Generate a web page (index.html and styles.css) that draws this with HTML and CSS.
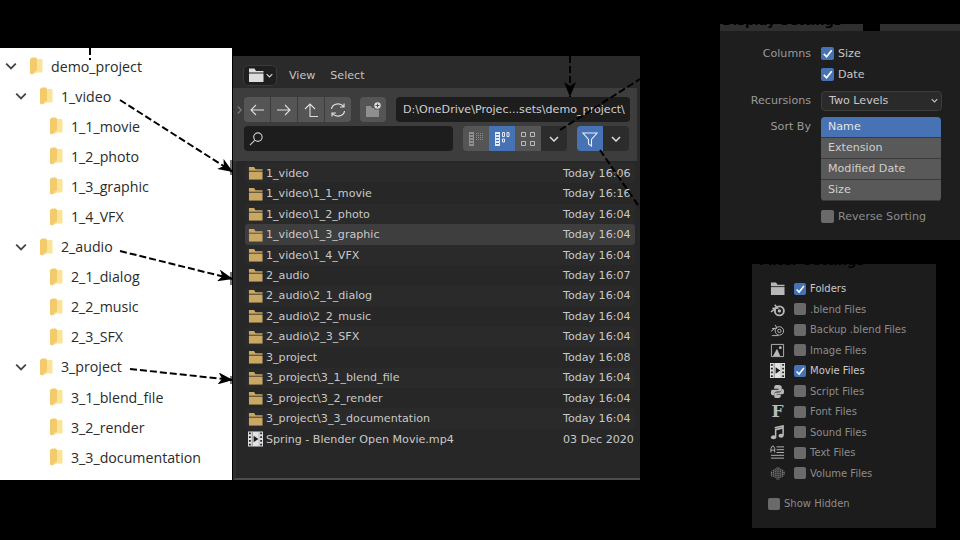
FILE: index.html
```html
<!DOCTYPE html>
<html lang="en">
<head>
  <meta charset="UTF-8">
  <title>Blender file browser with recursive folders</title>
  <link rel="stylesheet" href="styles.css">
</head>
<body>

<svg class="defs" width="0" height="0">
  <symbol id="win-folder" viewBox="0 0 14 18">
    <path d="M1 2 3 .5h4L8 2v13L3 17.500 1 16.500z" fill="#f3cb6c"/>
    <path d="M8 2h5l.5 1v12l-.5.5H4l4-2z" fill="#fbe397"/>
  </symbol>
  <symbol id="bl-folder" viewBox="0 0 16 14">
    <path d="M1 .5h5.500L8 3h7.500v1.500H1z" fill="currentColor"/>
    <path d="M1 5.500h14.500V14H1z" fill="currentColor"/>
  </symbol>
  <symbol id="film" viewBox="0 0 16 16">
    <path d="M0 0h16v16H0z" fill="#e2e2e2"/>
    <path d="M1 1h2v2H1zM1 5h2v2H1zM1 9h2v2H1zM1 13h2v2H1zM13 1h2v2h-2zM13 5h2v2h-2zM13 9h2v2h-2zM13 13h2v2h-2z" fill="#282828"/>
    <path d="M4 0h1v16H4zM11.500 0h.5v16h-.5z" fill="#8a8a8a"/>
    <path d="M6 4.500v7L11 8z" fill="#1c1c1c"/>
  </symbol>
  <symbol id="chev" viewBox="0 0 10 6">
    <path d="M1 1l4 4 4-4" fill="none" stroke="currentColor" stroke-width="1.500"/>
  </symbol>
  <symbol id="tick" viewBox="0 0 14 14">
    <path d="M3 7.500l3 3 5.500-7" fill="none" stroke="#fff" stroke-width="1.800"/>
  </symbol>
</svg>

<!-- explorer tree -->
<section class="tree">
  <div class="tree-row lvl0"><svg class="tw"><use href="#chev"/></svg><svg class="tf"><use href="#win-folder"/></svg>demo_project</div>
  <div class="tree-row lvl1"><svg class="tw"><use href="#chev"/></svg><svg class="tf"><use href="#win-folder"/></svg>1_video</div>
  <div class="tree-row lvl2"><svg class="tf"><use href="#win-folder"/></svg>1_1_movie</div>
  <div class="tree-row lvl2"><svg class="tf"><use href="#win-folder"/></svg>1_2_photo</div>
  <div class="tree-row lvl2"><svg class="tf"><use href="#win-folder"/></svg>1_3_graphic</div>
  <div class="tree-row lvl2"><svg class="tf"><use href="#win-folder"/></svg>1_4_VFX</div>
  <div class="tree-row lvl1"><svg class="tw"><use href="#chev"/></svg><svg class="tf"><use href="#win-folder"/></svg>2_audio</div>
  <div class="tree-row lvl2"><svg class="tf"><use href="#win-folder"/></svg>2_1_dialog</div>
  <div class="tree-row lvl2"><svg class="tf"><use href="#win-folder"/></svg>2_2_music</div>
  <div class="tree-row lvl2"><svg class="tf"><use href="#win-folder"/></svg>2_3_SFX</div>
  <div class="tree-row lvl1"><svg class="tw"><use href="#chev"/></svg><svg class="tf"><use href="#win-folder"/></svg>3_project</div>
  <div class="tree-row lvl2"><svg class="tf"><use href="#win-folder"/></svg>3_1_blend_file</div>
  <div class="tree-row lvl2"><svg class="tf"><use href="#win-folder"/></svg>3_2_render</div>
  <div class="tree-row lvl2"><svg class="tf"><use href="#win-folder"/></svg>3_3_documentation</div>
</section>

<!-- blender file browser -->
<section class="browser">
  <div class="menu-bar">
    <div class="editor-btn"><svg class="ed-folder"><use href="#bl-folder"/></svg><svg class="chev-s"><use href="#chev"/></svg></div>
    <span class="menu-item">View</span>
    <span class="menu-item">Select</span>
  </div>
  <div class="toolbar">
    <svg class="region-tab"><use href="#chev"/></svg>
    <div class="tool-row">
      <div class="btn-group">
        <div class="tbtn"><svg viewBox="0 0 16 16"><path d="M15 8H2M7 3 2 8l5 5" fill="none" stroke="currentColor" stroke-width="1.100"/></svg></div>
        <div class="tbtn"><svg viewBox="0 0 16 16"><path d="M1 8h13M9 3l5 5-5 5" fill="none" stroke="currentColor" stroke-width="1.100"/></svg></div>
        <div class="tbtn"><svg viewBox="0 0 16 16"><path d="M7 15V2M2 7l5-5 5 5M7 14.500h8" fill="none" stroke="currentColor" stroke-width="1.100"/></svg></div>
        <div class="tbtn"><svg viewBox="0 0 16 16"><path d="M1.500 7a6.500 5.500 0 0 1 12-2.500M14.500 9a6.500 5.500 0 0 1-12 2.500M10 5h4V1.500M6 11H2v3.500" fill="none" stroke="currentColor" stroke-width="1.200"/></svg></div>
      </div>
      <div class="tbtn single"><svg viewBox="0 0 16 16"><path d="M1 4h5l1 2h2.500v1.500H14V15H1z" fill="#8f8f8f"/><circle cx="12.500" cy="3.500" r="3.200" fill="#ddd"/><path d="M12.500 1.600v3.800M10.600 3.500h3.800" stroke="#555"/></svg></div>
      <div class="path-field">D:\OneDrive\Projec...sets\demo_project\</div>
    </div>
    <div class="tool-row">
      <div class="search-field"><svg viewBox="0 0 16 16"><circle cx="9.500" cy="6.500" r="4.500" fill="none" stroke="#ccc" stroke-width="1.200"/><path d="M6 10l-5 5" stroke="#ccc" stroke-width="1.200"/></svg></div>
      <div class="btn-group view-group">
        <div class="tbtn"><svg viewBox="0 0 16 16"><path d="M1 1h5v14H1z" fill="#909090"/><path d="M2 3.500h3M2 6.500h3M2 9.500h3M2 12.500h3" stroke="#555"/><path d="M8 2.500h7M8 4.500h7M8 6.500h7M8 8.500h7" stroke="#8a8a8a" stroke-dasharray="1 1"/></svg></div>
        <div class="tbtn on"><svg viewBox="0 0 16 16"><path d="M1 1h5v14H1z" fill="#e4ebf6"/><path d="M2 3.500h3M2 6.500h3M2 9.500h3M2 12.500h3" stroke="#4772b3"/><path d="M8.500 1.500h2v4h-2zM13 1.500h2v4h-2zM8.500 8h2v3h-2z" fill="none" stroke="#e4ebf6"/></svg></div>
        <div class="tbtn"><svg viewBox="0 0 16 16"><path d="M1.500 1.500h4v4h-4zM10.500 1.500h4v4h-4zM1.500 10.500h4v4h-4zM10.500 10.500h4v4h-4z" fill="none" stroke="#bbb"/></svg></div>
        <div class="tbtn dark"><svg class="chev-s"><use href="#chev"/></svg></div>
      </div>
      <div class="btn-group filter-group">
        <div class="tbtn on"><svg viewBox="0 0 16 16"><path d="M1 2h14L9.500 8.500V15l-3-2V8.500z" fill="none" stroke="#e8eef8" stroke-width="1.100"/></svg></div>
        <div class="tbtn dark"><svg class="chev-s"><use href="#chev"/></svg></div>
      </div>
    </div>
  </div>
  <div class="file-list">
    <div class="file-row"><svg class="fi"><use href="#bl-folder"/></svg><span class="fname">1_video</span><span class="fdate">Today 16:06</span></div>
    <div class="file-row"><svg class="fi"><use href="#bl-folder"/></svg><span class="fname">1_video\1_1_movie</span><span class="fdate">Today 16:16</span></div>
    <div class="file-row"><svg class="fi"><use href="#bl-folder"/></svg><span class="fname">1_video\1_2_photo</span><span class="fdate">Today 16:04</span></div>
    <div class="file-row hover"><svg class="fi"><use href="#bl-folder"/></svg><span class="fname">1_video\1_3_graphic</span><span class="fdate">Today 16:04</span></div>
    <div class="file-row"><svg class="fi"><use href="#bl-folder"/></svg><span class="fname">1_video\1_4_VFX</span><span class="fdate">Today 16:04</span></div>
    <div class="file-row"><svg class="fi"><use href="#bl-folder"/></svg><span class="fname">2_audio</span><span class="fdate">Today 16:07</span></div>
    <div class="file-row"><svg class="fi"><use href="#bl-folder"/></svg><span class="fname">2_audio\2_1_dialog</span><span class="fdate">Today 16:04</span></div>
    <div class="file-row"><svg class="fi"><use href="#bl-folder"/></svg><span class="fname">2_audio\2_2_music</span><span class="fdate">Today 16:04</span></div>
    <div class="file-row"><svg class="fi"><use href="#bl-folder"/></svg><span class="fname">2_audio\2_3_SFX</span><span class="fdate">Today 16:04</span></div>
    <div class="file-row"><svg class="fi"><use href="#bl-folder"/></svg><span class="fname">3_project</span><span class="fdate">Today 16:08</span></div>
    <div class="file-row"><svg class="fi"><use href="#bl-folder"/></svg><span class="fname">3_project\3_1_blend_file</span><span class="fdate">Today 16:04</span></div>
    <div class="file-row"><svg class="fi"><use href="#bl-folder"/></svg><span class="fname">3_project\3_2_render</span><span class="fdate">Today 16:04</span></div>
    <div class="file-row"><svg class="fi"><use href="#bl-folder"/></svg><span class="fname">3_project\3_3_documentation</span><span class="fdate">Today 16:04</span></div>
    <div class="file-row"><svg class="fi film"><use href="#film"/></svg><span class="fname">Spring - Blender Open Movie.mp4</span><span class="fdate">03 Dec 2020</span></div>
  </div>
</section>

<!-- display settings popover -->
<section class="display-panel">
  <div class="tabs">
    <div class="tab tab-main"><span class="cut-title">Display Settings</span></div>
    <div class="tab tab-rest"></div>
  </div>
  <div class="set-row tall">
    <span class="set-label">Columns</span>
    <span class="check on"><svg><use href="#tick"/></svg></span><span class="check-text">Size</span>
  </div>
  <div class="set-row tall">
    <span class="set-label"></span>
    <span class="check on"><svg><use href="#tick"/></svg></span><span class="check-text">Date</span>
  </div>
  <div class="set-row recur">
    <span class="set-label">Recursions</span>
    <div class="select">Two Levels<svg class="chev-s"><use href="#chev"/></svg></div>
  </div>
  <div class="set-row sort">
    <span class="set-label">Sort By</span>
    <div class="sort-list">
      <div class="sort-opt on">Name</div>
      <div class="sort-opt">Extension</div>
      <div class="sort-opt">Modified Date</div>
      <div class="sort-opt">Size</div>
    </div>
  </div>
  <div class="set-row reverse">
    <span class="set-label"></span>
    <span class="check"></span><span class="check-text dim">Reverse Sorting</span>
  </div>
</section>

<!-- filter settings popover -->
<section class="filter-panel">
  <div class="filter-title"><span class="cut-title">Filter Settings</span></div>
  <div class="filter-row">
    <svg class="ficon" viewBox="0 0 16 14"><use href="#bl-folder"/></svg>
    <span class="check on"><svg><use href="#tick"/></svg></span><span class="check-text">Folders</span>
  </div>
  <div class="filter-row">
    <svg class="ficon" viewBox="0 0 16 16"><circle cx="10" cy="9.500" r="4.800" fill="none" stroke="currentColor" stroke-width="2"/><circle cx="10" cy="9.500" r="1.800" fill="currentColor"/><path d="M1 10.500 6 7H2.500L8 6.500 5 3" fill="none" stroke="currentColor" stroke-width="1.600"/></svg>
    <span class="check"></span><span class="check-text dim">.blend Files</span>
  </div>
  <div class="filter-row">
    <svg class="ficon" viewBox="0 0 16 16"><circle cx="10" cy="9.500" r="4.500" fill="none" stroke="currentColor"/><circle cx="10" cy="9.500" r="1.800" fill="none" stroke="currentColor"/><path d="M1 10 5 7H2.500L7.500 6.500 5.500 3M2 14.500h7" fill="none" stroke="currentColor"/></svg>
    <span class="check"></span><span class="check-text dim">Backup .blend Files</span>
  </div>
  <div class="filter-row">
    <svg class="ficon" viewBox="0 0 16 16"><path d="M1.500 1.500h13v13h-13z" fill="none" stroke="currentColor"/><path d="M3 14l4.500-8 3.500 8z" fill="currentColor"/><circle cx="11" cy="5" r="1.500" fill="currentColor"/></svg>
    <span class="check"></span><span class="check-text dim">Image Files</span>
  </div>
  <div class="filter-row">
    <svg class="ficon" viewBox="0 0 16 16"><use href="#film"/></svg>
    <span class="check on"><svg><use href="#tick"/></svg></span><span class="check-text">Movie Files</span>
  </div>
  <div class="filter-row">
    <svg class="ficon" viewBox="0 0 16 16"><path d="M8 1C4 1 4.500 3 4.500 5H9v1H3C1 6 1 8 1 9.500S2 12 3 12h1.500c0-3 1-4 3.500-4h3c1 0 1.500-1 1.500-2V3c0-1.500-2-2-4.500-2z" fill="currentColor"/><path d="M8 15c4 0 3.500-2 3.500-3.500H7V11h6c2 0 2-2 2-3.500S14 5 13 5h-.5c0 3-1 4-3.500 4H6c-1 0-1.500 1-1.500 2v2c0 1.500 1 2 3.500 2z" fill="currentColor"/></svg>
    <span class="check"></span><span class="check-text dim">Script Files</span>
  </div>
  <div class="filter-row">
    <span class="ficon font-ic">F</span>
    <span class="check"></span><span class="check-text dim">Font Files</span>
  </div>
  <div class="filter-row">
    <svg class="ficon" viewBox="0 0 16 16"><path d="M5 3l9-2v2L6 5v8M14 2v9" fill="none" stroke="currentColor" stroke-width="1.600"/><ellipse cx="3.800" cy="13" rx="2.800" ry="2.200" fill="currentColor"/><ellipse cx="11.800" cy="11.500" rx="2.800" ry="2.200" fill="currentColor"/></svg>
    <span class="check"></span><span class="check-text dim">Sound Files</span>
  </div>
  <div class="filter-row">
    <svg class="ficon" viewBox="0 0 16 16"><path d="M1 8V3.500L2.500 1h1L5 3.500V8M1 5.500h4M7 2h8M7 5h8M7 8h8M1 11h14M1 14h14" fill="none" stroke="currentColor"/></svg>
    <span class="check"></span><span class="check-text dim">Text Files</span>
  </div>
  <div class="filter-row">
    <svg class="ficon" viewBox="0 0 16 16"><path d="M1.500 6v5M3.500 4v8M5.500 3v10M7.500 1.500v13M9.500 1.500v13M11.500 3v10M13.500 4v8M15 6v4" fill="none" stroke="currentColor" stroke-dasharray="1.500 .5" opacity=".8"/></svg>
    <span class="check"></span><span class="check-text dim">Volume Files</span>
  </div>
  <div class="hidden-row">
    <span class="check"></span><span class="check-text dim">Show Hidden</span>
  </div>
</section>

<!-- arrows lie over the panels -->
<svg class="arrows" viewBox="0 0 960 540">
  <defs>
    <marker id="head" markerWidth="16" markerHeight="12" refX="15" refY="6" orient="auto" markerUnits="userSpaceOnUse">
      <path d="M0 0 15 6 0 12 4 6z" fill="#000"/>
    </marker>
  </defs>
  <path class="tip-mark" d="M230 160h2v15h-2zM230 272h2v13h-2zM230 376h2v8h-2z"/>
  <g fill="none" stroke="#000" stroke-width="2" stroke-dasharray="7 3">
    <path d="M90 48v12"/>
    <path d="M120 100 233 172" marker-end="url(#head)"/>
    <path d="M120 251 233 279" marker-end="url(#head)"/>
    <path d="M130 369 233 380" marker-end="url(#head)"/>
    <path d="M570 56v41" marker-end="url(#head)"/>
    <path d="M560 130 640 79"/>
    <path d="M600 150 640 208"/>
  </g>
</svg>

</body>
</html>
```

FILE: styles.css
```css
body {
  margin: 0;
  width: 960px;
  height: 540px;
  background: #000;
  overflow: hidden;
  position: relative;
  font-family: "DejaVu Sans", sans-serif;
  font-size: 11.100px;
  color: #c8c8c8;
}

.defs {
  position: absolute;
}

svg {
  display: block;
}

.arrows {
  position: absolute;
  left: 0;
  top: 0;
  width: 960px;
  height: 540px;
  pointer-events: none;
}

.tip-mark {
  fill: #777;
}

/* explorer tree */
.tree {
  position: absolute;
  left: 0;
  top: 48px;
  width: 232px;
  height: 432px;
  background: #fff;
  padding-top: 3px;
  box-sizing: border-box;
  font-family: "Open Sans", sans-serif;
  font-size: 14.200px;
  color: #2b2b2b;
}

.tree-row {
  height: 30.100px;
  display: flex;
  align-items: center;
}

.lvl0 { padding-left: 5px; }
.lvl1 { padding-left: 15px; }
.lvl2 { padding-left: 49px; }

.tw {
  width: 12px;
  height: 8px;
  color: #444;
  margin-right: 12px;
}

.tf {
  width: 14px;
  height: 18px;
  margin-right: 8px;
}

/* file browser */
.browser {
  position: absolute;
  left: 233px;
  top: 56px;
  width: 407px;
  height: 424px;
  background: #232323;
  display: flex;
  flex-direction: column;
}

.menu-bar {
  height: 32px;
  background: #2a2a2a;
  display: flex;
  align-items: center;
  padding: 6px 0 0 10px;
  box-sizing: border-box;
}

.editor-btn {
  width: 34px;
  height: 21px;
  background: #1f1f1f;
  border: 1px solid #3a3a3a;
  box-sizing: border-box;
  border-radius: 5px;
  display: flex;
  align-items: center;
  justify-content: center;
  gap: 2px;
  margin-right: 12px;
  color: #ddd;
}

.ed-folder {
  width: 16px;
  height: 14px;
}

.chev-s {
  width: 7px;
  height: 5px;
}

.menu-item {
  margin-right: 15px;
  color: #c4c4c4;
}

.toolbar {
  position: relative;
  height: 73px;
  background: #3d3d3d;
  padding: 9px 0 0 11px;
  border-right: 3px solid #2a2a2a;
  box-sizing: border-box;
  display: flex;
  flex-direction: column;
  gap: 4px;
}

.region-tab {
  position: absolute;
  left: 2px;
  top: 19px;
  width: 9px;
  height: 6px;
  color: #777;
  transform: rotate(-90deg);
}

.tool-row {
  display: flex;
  height: 25px;
}

.btn-group {
  display: flex;
  border-radius: 4px;
  overflow: hidden;
  gap: 1px;
}

.tbtn {
  width: 26px;
  height: 25px;
  background: #555;
  color: #ddd;
  display: flex;
  align-items: center;
  justify-content: center;
}

.tbtn svg {
  width: 16px;
  height: 16px;
}

.tbtn .chev-s {
  width: 10px;
  height: 6px;
}

.tbtn.single {
  border-radius: 4px;
  margin-left: 9px;
}

.tbtn.on {
  background: #4772b3;
}

.tbtn.dark {
  background: #2c2c2c;
}

.path-field {
  margin-left: 10px;
  width: 234px;
  background: #1d1d1d;
  border-radius: 4px;
  line-height: 25px;
  padding-left: 7px;
  box-sizing: border-box;
  color: #d0d0d0;
  white-space: nowrap;
}

.search-field {
  width: 209px;
  background: #1d1d1d;
  border-radius: 4px;
  display: flex;
  align-items: center;
  padding-left: 5px;
  box-sizing: border-box;
}

.search-field svg {
  width: 15px;
  height: 15px;
}

.view-group {
  margin-left: 10px;
  gap: 0;
}

.filter-group {
  margin-left: 10px;
  gap: 0;
}

/* file list */
.file-list {
  flex: 1;
  padding: 2px 5px 0 9px;
  border-left: 3px solid #2e2e2e;
  border-bottom: 2px solid #4d4d4d;
  background: #272727;
}

.file-row {
  height: 20.460px;
  display: flex;
  align-items: center;
  color: #c9c9c9;
  padding-left: 3px;
  border-radius: 3px;
}

.file-row:nth-child(odd) {
  background: #2a2a2a;
}

.file-row.hover {
  background: #3e3e3e;
}

.fi {
  width: 15px;
  height: 14px;
  color: #c9a863;
  margin-right: 3px;
  flex: none;
}

.fi.film {
  height: 16px;
}

.fname {
  flex: 1;
  white-space: nowrap;
}

.fdate {
  width: 72px;
  white-space: nowrap;
}

/* popovers */
.display-panel {
  position: absolute;
  left: 720px;
  top: 24px;
  width: 240px;
  height: 216px;
  background: #1e1e1e;
  box-sizing: border-box;
}

.tabs {
  display: flex;
  justify-content: space-between;
  height: 7px;
  background: #000;
  margin-bottom: 12px;
}

.tab {
  background: #2f2f2f;
  overflow: hidden;
}

.tab-main {
  width: 143px;
}

.tab-rest {
  width: 80px;
}

.cut-title {
  display: block;
  margin-top: -10px;
  margin-left: 2px;
  font-size: 13px;
  font-weight: bold;
  line-height: 14px;
  color: #000;
  white-space: nowrap;
}

.set-row {
  display: flex;
  align-items: center;
}

.set-row.tall {
  height: 21px;
}

.set-label {
  width: 91px;
  text-align: right;
  margin-right: 10px;
  color: #9a9a9a;
}

.check {
  width: 13px;
  height: 13px;
  background: #6a6a6a;
  border-radius: 2px;
  margin-right: 4px;
  flex: none;
}

.check.on {
  background: #4772b3;
}

.check svg {
  width: 100%;
  height: 100%;
}

.check-text {
  color: #c8c8c8;
}

.check-text.dim {
  color: #8c8c8c;
}

.recur {
  margin-top: 5px;
  height: 21px;
}

.select {
  width: 121px;
  height: 20px;
  background: #2a2a2a;
  border: 1px solid #3c3c3c;
  border-radius: 4px;
  box-sizing: border-box;
  padding: 0 3px 0 7px;
  display: flex;
  align-items: center;
  justify-content: space-between;
}

.sort {
  margin-top: 5.500px;
  align-items: flex-start;
}

.sort .set-label {
  line-height: 20px;
}

.sort-list {
  width: 120px;
  border-radius: 4px;
  overflow: hidden;
}

.sort-opt {
  height: 20px;
  line-height: 20px;
  padding-left: 7px;
  background: #595959;
  border-bottom: 1px solid #3a3a3a;
  color: #cfcfcf;
}

.sort-opt.on {
  background: #4772b3;
  color: #e6e6e6;
}

.reverse {
  margin-top: 9px;
}

.filter-panel {
  position: absolute;
  left: 752px;
  top: 264px;
  width: 184px;
  height: 264px;
  background: #1c1c1c;
  padding-top: 10.400px;
  box-sizing: border-box;
}

.filter-title {
  height: 4px;
  margin: -10.400px 0 10.400px 5px;
  overflow: hidden;
}

.filter-row {
  height: 20.500px;
  display: flex;
  align-items: center;
  padding-left: 18px;
}

.ficon {
  width: 15px;
  height: 15px;
  margin-right: 9px;
  color: #b8b8b8;
  flex: none;
}

.font-ic {
  font-family: "DejaVu Serif", serif;
  font-weight: bold;
  font-size: 17px;
  line-height: 15px;
  text-align: center;
}

.filter-panel .check {
  width: 12px;
  height: 12px;
}

.filter-row .check-text,
.hidden-row .check-text {
  font-size: 10px;
}

.hidden-row {
  display: flex;
  align-items: center;
  height: 20px;
  padding-left: 16px;
  margin-top: 10.600px;
}
```
